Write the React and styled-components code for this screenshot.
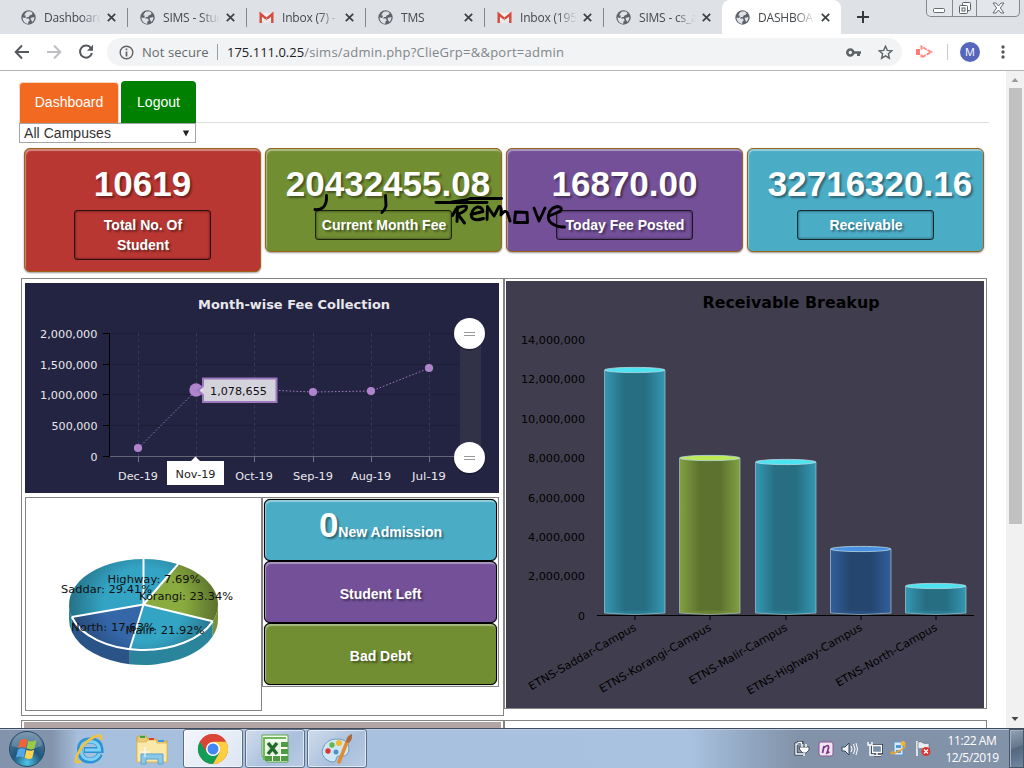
import React from "react";
import styled, { createGlobalStyle } from "styled-components";

const Global = createGlobalStyle`
  * { box-sizing: border-box; }
  html, body { margin: 0; padding: 0; background: #fff; overflow: hidden; }
  svg { display: block; flex: none; }
`;
const ui = `"Open Sans", "Noto Sans", sans-serif`;
const arial = `"Liberation Sans", Arial, sans-serif`;
const verdana = `"DejaVu Sans", Verdana, sans-serif`;

const Screen = styled.div`
  width: 1024px; height: 768px; display: flex; flex-direction: column;
  position: relative; overflow: hidden; font-family: ${arial};
`;

/* ---------- browser ---------- */
const TabStrip = styled.div`
  height: 34px; flex: none; display: flex; background: #dee1e6; padding-left: 8px;
`;
const Tab = styled.div`
  width: 119px; height: 34px; display: flex; align-items: center; padding: 0 11px 0 13px;
  font: 12px ${ui}; letter-spacing: -0.2px; color: #45494d; position: relative;
  background: ${(p) => (p.$active ? "#fff" : "transparent")};
  border-radius: 8px 8px 0 0;
  &::after {
    content: ""; position: absolute; right: -1px; top: 8px; width: 1px; height: 19px;
    background: ${(p) => (p.$sep ? "#84878c" : "transparent")};
  }
`;
const TabTitle = styled.span`
  width: 57px; margin-left: 8px; margin-right: 6px; white-space: nowrap; overflow: hidden;
  mask-image: linear-gradient(90deg, #000 65%, transparent 100%);
`;
const NewTab = styled.div`padding: 10px 0 0 15px;`;
const WinButtons = styled.div`
  margin-left: auto; margin-right: 4px; width: 94px; height: 17px; display: flex;
  border: 1px solid #85888d; border-top: 0; border-radius: 0 0 5px 5px; background: #e3e6ea;
`;
const WinButton = styled.div`
  width: ${(p) => p.$w}px; display: flex; align-items: center; justify-content: center;
  border-right: ${(p) => (p.$last ? 0 : 1)}px solid #85888d;
`;
const Toolbar = styled.div`
  height: 37px; flex: none; display: flex; align-items: center; background: #fff;
  border-bottom: 1px solid #b4b4b6; padding: 0 0 0 14px;
`;
const ToolIcon = styled.div`margin-right: ${(p) => p.$gap || 0}px;`;
const Extension = styled.div`margin-left: 14px;`;
const Omnibox = styled.div`
  width: 795px; height: 28px; border-radius: 14px; background: #f1f3f4; display: flex;
  align-items: center; padding: 0 9px 0 12px; margin-left: 13px; font: 13px ${ui}; color: #80868b;
`;
const Secure = styled.span`
  margin-left: 8px; width: 76px; border-right: 1px solid #9a9da1; line-height: 16px; color: #666a6e;
  white-space: nowrap; height: 16px; letter-spacing: 0.08px;
`;
const Url = styled.span`
  margin-left: 9px; flex: 1; white-space: nowrap; letter-spacing: 0.24px;
  b { font-weight: 400; color: #202124; letter-spacing: 0; }
`;
const Avatar = styled.div`
  width: 20px; height: 20px; border-radius: 50%; background: #5666bd; color: #fff;
  font: 11px/20px ${ui}; text-align: center; margin: 0 21px 0 12px;
`;
const Divider = styled.div`width: 1px; height: 16px; background: #c9cbcf; margin-left: 14px;`;

/* ---------- page ---------- */
const Viewport = styled.div`height: 657px; flex: none; display: flex; overflow: hidden;`;
const Page = styled.div`width: 1006px; padding: 10px 0 0 19px; height: 657px; overflow: hidden;`;
const Nav = styled.div`
  width: 970px; height: 42px; display: flex; align-items: flex-end; border-bottom: 1px solid #ddd;
`;
const NavTab = styled.div`
  width: ${(p) => p.$w}px; height: ${(p) => p.$h}px; margin: 0 ${(p) => p.$gap}px -1px 0;
  background: ${(p) => p.$bg}; color: #fff; font-size: 14px; text-align: center;
  border-radius: 4px 4px 0 0;
  border: 1px solid ${(p) => p.$edge}; border-width: ${(p) => (p.$edge === "none" ? 0 : "1px 1px 0")};
  line-height: ${(p) => (p.$edge === "none" ? 42 : 38)}px;
`;
const Select = styled.div`
  width: 177px; height: 20px; border: 1px solid #a6a6a6; display: flex; justify-content: space-between;
  align-items: center; padding: 0 5px 0 4px; font-size: 14px; letter-spacing: 0.05px; color: #333; background: #fff;
`;
const Cards = styled.div`display: flex; align-items: flex-start; gap: 4px; margin: 5px 0 0 5px; height: 130px;`;
const Card = styled.div`
  width: 237px; padding: 16px 0 11px; display: flex; flex-direction: column; align-items: center;
  background: ${(p) => p.$bg}; border: 1px solid #9a6414; border-radius: 6px;
  box-shadow: inset 1px 2px 1px rgba(255,255,255,.4), 0 1px 2px rgba(0,0,0,.4);
  color: #fff; font-weight: bold; text-shadow: 2px 2px 2px rgba(0,0,0,.4);
`;
const Amount = styled.div`
  font-size: 35px; line-height: 37px; white-space: nowrap; margin-bottom: 8px;
  transform: translateX(${(p) => p.$shift || 0}px);
`;
const CardLabel = styled.div`
  width: 137px; padding: 4px 16px 4px 17px; border: 1px solid rgba(0,0,0,.75); border-radius: 3px;
  box-shadow: inset 0 0 3px rgba(0,0,0,.6); font-size: 14px; line-height: 20px; text-align: center;
  span { white-space: nowrap; margin: 0 -12px; }
`;
const Grid = styled.div`display: flex; align-items: flex-start; margin-left: 2px; height: 442px;`;
const LeftCell = styled.div`width: 483px; height: 438px; border: 1px solid #848484; padding: 4px 3px;`;
const RightCell = styled.div`width: 483px; height: 431px; border: 1px solid #848484; padding: 2px 1px;`;
const Lower = styled.div`display: flex; margin-top: 4px; align-items: flex-start;`;
const PieBox = styled.div`width: 237px; height: 214px; border: 1px solid #848484;`;
const Stack = styled.div`width: 237px; height: 190px; border: 1px solid #848484; padding: 1px;`;
const StackButton = styled.div`
  height: 62px; border: 1px solid #000; border-radius: 6px; background: ${(p) => p.$bg};
  box-shadow: inset 1px 2px 1px rgba(255,255,255,.4), 0 0 1px #000;
  color: #fff; font-size: 14px; font-weight: bold; display: flex; justify-content: center;
  align-items: baseline; line-height: ${(p) => (p.$big ? 50 : 64)}px;
  text-shadow: 2px 2px 2px rgba(0,0,0,.4);
  big { font-size: 35px; }
`;
const NextRow = styled.div`display: flex; margin-left: 2px;`;
const NextCell = styled.div`
  width: 483px; height: 20px; border: 1px solid #848484; padding: 1px 2px;
  &::before { content: ""; display: block; height: 18px; background: ${(p) => p.$fill || "#fff"}; }
`;
const Scrollbar = styled.div`
  width: 18px; background: #f1f1f1; display: flex; flex-direction: column; align-items: center;
`;
const Thumb = styled.div`width: 13px; height: 436px; flex: none; background: #c1c1c1; margin: 0 0 auto;`;

/* ---------- taskbar ---------- */
const Taskbar = styled.div`
  height: 40px; flex: none; border-top: 1px solid #3f4a5c; display: flex; align-items: center;
  box-shadow: inset 0 1px 0 #bfcde0;
  background: linear-gradient(90deg, #8293ab 0, #8294ac 52px, #a6bfdc 78px, #a8c1df 370px, #a9c2e0 690px, #8fa4be 755px, #8292a8 800px, #8292a8 100%);
`;
const Slot = styled.div`width: ${(p) => p.$w}px; display: flex; justify-content: center;`;
const AppButton = styled.div`
  width: 60px; height: 39px; margin-right: 2px; border: 1px solid #5d6d86; border-radius: 3px;
  box-shadow: inset 0 0 0 1px rgba(255,255,255,.6); display: flex; align-items: center; justify-content: center;
  background: ${(p) => (p.$active ? "linear-gradient(135deg,#f3f6fb,#dbe5f2)" : "linear-gradient(135deg,#d0dced,#a9bfdc 60%,#b9cce4)")};
`;
const Tray = styled.div`margin-left: auto; display: flex; align-items: center;`;
const TrayIcons = styled.div`display: flex; align-items: center; gap: 7.600px; margin-right: 8px;`;
const Clock = styled.div`
  width: 64px; margin-right: 5px; text-align: center; color: #fff; font: 12px/17px ${ui}; letter-spacing: -0.4px;
  white-space: nowrap;
`;
const ShowDesktop = styled.div`
  width: 15px; height: 39px; border: 1px solid #47576a; box-shadow: inset 1px 1px 0 #a5b1c2;
  background: linear-gradient(160deg,#94a2b4 0,#66788f 45%,#53677e 50%,#7187a0 100%);
`;
const Ink = styled.svg`position: absolute; left: 310px; top: 190px;`;

/* ---------- icons ---------- */
const Globe = () => (
  <svg width="15" height="15" viewBox="0 0 15 15">
    <circle cx="7.500" cy="7.500" r="7.200" fill="#5f6368" />
    <path d="M6.500 1.600h3.500l1.600 1.600-1 1.600-2 .6-.8 1.600H6L5 8.400h2.800l1 2-1.500 1.400v2C4 13.700 1.700 11 1.500 7.500L4.400 8l.4-2.500H3.300C4 3.500 5 2.300 6.500 1.600z M9.500 8l3.800-1c.2 2-.6 3.800-2 5l-1-1.700z" fill="#dee1e6" />
  </svg>
);
const Gmail = () => (
  <svg width="15" height="15" viewBox="0 0 15 15">
    <path d="M1 3h13v9.500H1z" fill="#f2efee" />
    <path d="M1.700 13V4l5.800 5 5.800-5v9" fill="none" stroke="#d64a3d" strokeWidth="2.400" strokeLinejoin="miter" />
    <path d="M3.500 12l4-3 4 3" stroke="#ddd" fill="none" />
  </svg>
);
const Close = () => (
  <svg width="9" height="9" viewBox="0 0 9 9"><path d="M.8.8l7.400 7.400M8.200.8L.8 8.200" stroke="#3c4043" strokeWidth="1.700" /></svg>
);

const tabs = [
  ["Dashboard", "web"], ["SIMS - Student", "web"], ["Inbox (7) - m", "mail"], ["TMS", "web"],
  ["Inbox (195) -", "mail"], ["SIMS - cs_adm", "web"], ["DASHBOARD", "web"],
];

const Browser = () => (
  <>
    <TabStrip>
      {tabs.map(([name, kind], i) => (
        <Tab key={i} $active={i === 6} $sep={i < 5}>
          {kind === "mail" ? <Gmail /> : <Globe />}
          <TabTitle>{name}</TabTitle>
          <Close />
        </Tab>
      ))}
      <NewTab><svg width="14" height="14" viewBox="0 0 14 14"><path d="M7 1v12M1 7h12" stroke="#35393d" strokeWidth="2" /></svg></NewTab>
      <WinButtons>
        <WinButton $w={26}><svg width="14" height="15"><rect x="1.500" y="7.500" width="11" height="4" rx="1" fill="#fff" stroke="#686b70" /></svg></WinButton>
        <WinButton $w={25}><svg width="14" height="14" fill="#fff" stroke="#5c5f64"><rect x="4.500" y="1.500" width="8" height="8" rx="1" /><rect x="1.500" y="4.500" width="8" height="8" rx="1" /><rect x="4" y="7" width="3" height="3" /></svg></WinButton>
        <WinButton $w={42} $last><svg width="13" height="12"><path d="M1 1h3l2.500 3L9 1h3L8.300 6 12 11H9L6.500 8 4 11H1l3.700-5z" fill="#fff" stroke="#686b70" /></svg></WinButton>
      </WinButtons>
    </TabStrip>
    <Toolbar>
      <ToolIcon $gap={16}><svg width="16" height="16" fill="none" stroke="#55595e" strokeWidth="2"><path d="M15 8H2M8 1.500L1.700 8 8 14.500" /></svg></ToolIcon>
      <ToolIcon $gap={16}><svg width="16" height="16" fill="none" stroke="#bdbfc2" strokeWidth="2"><path d="M1 8h13M8 1.500L14.300 8 8 14.500" /></svg></ToolIcon>
      <svg width="16" height="16"><path d="M13 4.200A6 6 0 1 0 13.900 9" fill="none" stroke="#55595e" strokeWidth="2" /><path d="M15 .8v6H9z" fill="#55595e" /></svg>
      <Omnibox>
        <svg width="15" height="15" fill="none" stroke="#5f6368" strokeWidth="1.400"><circle cx="7.500" cy="7.500" r="6.300" /><path d="M7.500 6.500v5M7.500 3.500v1.700" strokeWidth="1.700" /></svg>
        <Secure>Not secure</Secure>
        <Url><b>175.111.0.25</b>/sims/admin.php?ClieGrp=&amp;&amp;port=admin</Url>
        <ToolIcon $gap={17}><svg width="15" height="9"><circle cx="4.300" cy="4.500" r="3" fill="none" stroke="#5f6368" strokeWidth="2.600" /><path d="M7 3.200h8v2.600h-1v2.200h-3V5.800H7z" fill="#5f6368" /></svg></ToolIcon>
        <svg width="15" height="15" viewBox="0 0 15 15"><path d="M7.500 1.300l1.800 4.100 4.500.4-3.400 3 1 4.400-3.900-2.300-3.900 2.300 1-4.400-3.400-3 4.500-.4z" fill="none" stroke="#5f6368" strokeWidth="1.400" /></svg>
      </Omnibox>
      <Extension><svg width="17" height="14"><rect x="0" y="4" width="4" height="6" fill="#ff7b78" /><path d="M5.500 4.500V1.500L15 7l-9.500 5.500v-3" fill="none" stroke="#ff8885" strokeWidth="2" strokeDasharray="4 1" /></svg></Extension>
      <Divider />
      <Avatar>M</Avatar>
      <svg width="4" height="14" fill="#55595e"><circle cx="2" cy="2" r="1.700" /><circle cx="2" cy="7" r="1.700" /><circle cx="2" cy="12" r="1.700" /></svg>
    </Toolbar>
  </>
);

/* ---------- charts ---------- */
const months = [["Dec-19", 138.5, 448], ["Nov-19", 196.5, 390], ["Oct-19", 254.5, 389.5], ["Sep-19", 313.5, 392], ["Aug-19", 371.5, 391], ["Jul-19", 429.5, 368]];
const feeTicks = [["2,000,000", 333.5, 57.5], ["1,500,000", 364.5, 57.5], ["1,000,000", 394.5, 57.5], ["500,000", 425.5, 46], ["0", 456.5, 7]];

const Knob = ({ y }) => (
  <g>
    <circle cx="469.500" cy={y + 1} r="16" fill="#111122" opacity=".5" />
    <circle cx="469.500" cy={y} r="15.500" fill="#fff" />
    <path d={`M464 ${y - 1}h11M464 ${y + 2}h11`} stroke="#999" />
  </g>
);

const FeeChart = () => (
  <svg width="474" height="210" viewBox="25 283 474 210" fontFamily={verdana} fontSize="11" fill="#e8e8ec">
    <rect x="25" y="283" width="474" height="210" fill="#232342" />
    <text x="294" y="309" fontSize="13" fontWeight="bold" textAnchor="middle" textLength="192" lengthAdjust="spacingAndGlyphs">Month-wise Fee Collection</text>
    {feeTicks.map(([t, y, w]) => (
      <g key={t}>
        <path d={`M110 ${y}H458`} stroke="#1d1d36" />
        <path d={`M103 ${y}H110`} stroke="#000" />
        <text x="97.500" y={y + 4.500} textAnchor="end" textLength={w} lengthAdjust="spacingAndGlyphs">{t}</text>
      </g>
    ))}
    {months.map(([m, x]) => (
      <g key={m}>
        <path d={`M${x} 333V456`} stroke="#383853" strokeDasharray="3 3" />
        <path d={`M${x} 457v5`} stroke="#73738a" />
        <text x={x - 0.5} y="480" textAnchor="middle" textLength={m === "Jul-19" ? 34 : m === "Oct-19" ? 37.5 : 40} lengthAdjust="spacingAndGlyphs">{m}</text>
      </g>
    ))}
    <path d="M109.500 333v124" stroke="#000" />
    <path d="M110 456.500H458" stroke="#656578" />
    <rect x="460" y="333" width="21" height="124" fill="#313147" />
    <polyline points={months.map((m) => m[1] + "," + m[2]).join(" ")} fill="none" stroke="#a77ec2" strokeDasharray="1.500 2" />
    {months.map(([m, x, y], i) => <circle key={m} cx={x - 0.5} cy={y} r={i === 1 ? 6.7 : 4.1} fill="#b084cc" />)}
    <path d="M203 378.500H276.500V402H203V395L198 390.500 203 386z" fill="#e4e2e8" fillOpacity=".92" stroke="#9d77c0" strokeWidth="2" />
    <text x="210" y="395" fill="#111" textLength="57" lengthAdjust="spacingAndGlyphs">1,078,655</text>
    <path d="M167 461H191L195.500 456.500 200 461H224V485H167z" fill="#fff" />
    <text x="195.500" y="478" textAnchor="middle" fill="#222" textLength="40" lengthAdjust="spacingAndGlyphs">Nov-19</text>
    <Knob y={333.5} />
    <Knob y={457.5} />
  </svg>
);

const bars = [
  ["ETNS-Saddar-Campus", 604.5, 370, "teal", "#4ce4f0"], ["ETNS-Korangi-Campus", 679.5, 458, "olive", "#bdea55"],
  ["ETNS-Malir-Campus", 755.5, 462, "teal", "#4ce4f0"], ["ETNS-Highway-Campus", 830.5, 549, "navy", "#4a90e4"],
  ["ETNS-North-Campus", 905.5, 586, "teal", "#4ce4f0"],
];
const ramps = { teal: ["#3498b3", "#276e82"], olive: ["#83a142", "#5d722e"], navy: ["#315f9d", "#25466f"] };
const labelLengths = [122, 127, 111, 131, 115];

const ReceivableChart = () => (
  <svg width="478" height="427" viewBox="506 281 478 427" fontFamily={verdana} fontSize="11" fill="#000">
    <defs>
      {Object.entries(ramps).map(([id, [edge, mid]]) => (
        <linearGradient id={id} key={id}>
          <stop offset="0" stopColor={edge} /><stop offset=".33" stopColor={mid} />
          <stop offset=".67" stopColor={mid} /><stop offset="1" stopColor={edge} />
        </linearGradient>
      ))}
    </defs>
    <rect x="506" y="281" width="478" height="427" fill="#403e4e" />
    <text x="791" y="308" fontSize="16" fontWeight="bold" textAnchor="middle" textLength="177" lengthAdjust="spacingAndGlyphs">Receivable Breakup</text>
    {[14, 12, 10, 8, 6, 4, 2, 0].map((n, i) => (
      <text key={n} x="585" y={344 + i * 39.4} textAnchor="end" textLength={n > 8 ? 64 : n ? 57 : 7} lengthAdjust="spacingAndGlyphs">{n ? n + ",000,000" : "0"}</text>
    ))}
    {bars.map(([name, x, y, id, cap], i) => (
      <g key={name}>
        <path d={`M${x} ${y}V613Q${x + 30} 616 ${x + 60.5} 613V${y}z`} fill={`url(#${id})`} stroke="#a0bfc6" strokeOpacity=".75" />
        <path d={`M${x + 1} 612.500Q${x + 30} 608.500 ${x + 59.5} 612.500Q${x + 30} 616 ${x + 1} 612.500`} fill={ramps[id][0]} opacity=".35" />
        <ellipse cx={x + 30.25} cy={y} rx="30" ry="2.600" fill={cap} stroke="#b5dce6" strokeWidth=".8" />
        <path d={`M${x + 30.5} 616v4`} stroke="#000" />
        <text transform={`translate(${x + 32.5} 629.500) rotate(-30)`} textAnchor="end" textLength={labelLengths[i]} lengthAdjust="spacingAndGlyphs">{name}</text>
      </g>
    ))}
    <path d="M597 615.500H974" stroke="#000" />
  </svg>
);

const slices = [["Highway", 7.69, "pTeal", "#2a849c"], ["Korangi", 23.34, "pOlive", "#76923a"], ["Malir", 21.92, "pTeal", "#2a849c"], ["North", 17.63, "pNavy", "#2a5488"], ["Saddar", 29.41, "pTeal", "#2a849c"]];
const CX = 143.5, CY = 604.5, RX = 74.5, RY = 45.5, DEPTH = 15;
const at = (f, dy = 0) => `${CX + RX * Math.sin(f * 2 * Math.PI)} ${CY - RY * Math.cos(f * 2 * Math.PI) + dy}`;
const pieLabels = [["Highway: 7.69%", 107.5, 583, 93], ["Saddar: 29.41%", 61, 593, 91], ["Korangi: 23.34%", 139, 600, 94], ["North: 17.63%", 71, 631, 84], ["Malir: 21.92%", 125.5, 634, 79]];

const PieChart = () => {
  let acc = 0;
  const parts = slices.map(([n, v, fill, side]) => {
    const a = acc; acc += v / 100;
    return { n, a, b: acc, fill, side };
  });
  return (
    <svg width="235" height="212" viewBox="26 498 235 212" fontFamily={verdana} fontSize="11" fill="#111">
      <defs>
        {[["pTeal", "#34a4c4", "#22697c"], ["pOlive", "#8aab3f", "#52672a"], ["pNavy", "#3466a8", "#24416a"]].map(([id, c, e]) => (
          <radialGradient key={id} id={id} gradientUnits="userSpaceOnUse" cx="0" cy="0" r="1" gradientTransform="translate(143.5 604.5) scale(80 74)">
            <stop offset="0" stopColor={c} /><stop offset=".5" stopColor={c} /><stop offset="1" stopColor={e} />
          </radialGradient>
        ))}
      </defs>
      {parts.map((p) => {
        const a = Math.max(p.a, 0.25), b = Math.min(p.b, 0.75);
        return b > a ? <path key={p.n} d={`M${at(a)}A${RX} ${RY} 0 0 1 ${at(b)}L${at(b, DEPTH)}A${RX} ${RY} 0 0 0 ${at(a, DEPTH)}z`} fill={p.side} /> : null;
      })}
      {parts.map((p) => <path key={p.n} d={`M${CX} ${CY}L${at(p.a)}A${RX} ${RY} 0 0 1 ${at(p.b)}z`} fill={`url(#${p.fill})`} />)}
      {parts.map((p) => <path key={p.n} d={`M${CX} ${CY}L${at(p.a)}`} stroke="#fff" strokeWidth="2" />)}
      <path d={`M${at(parts[1].b)}A${RX} ${RY} 0 0 1 ${at(parts[3].b)}`} fill="none" stroke="#fff" strokeWidth="2" />
      {pieLabels.map(([t, x, y, w]) => <text key={t} x={x} y={y} textLength={w} lengthAdjust="spacingAndGlyphs">{t}</text>)}
    </svg>
  );
};

const stats = [
  ["10619", "Total No. Of Student", "#b93733", 0], ["20432455.08", "Current Month Fee", "#718e33", 4.5],
  ["16870.00", "Today Fee Posted", "#735098", 0], ["32716320.16", "Receivable", "#4bacc6", 4.5],
];

const Dashboard = () => (
  <Viewport>
    <Page>
      <Nav>
        <NavTab $w={100} $h={41} $gap={2} $bg="#f26a21" $edge="#f6d8c5">Dashboard</NavTab>
        <NavTab $w={75} $h={42} $gap={0} $bg="#008000" $edge="none">Logout</NavTab>
      </Nav>
      <Select>All Campuses<svg width="8" height="7"><path d="M.8.500h6.400L4 6.500z" fill="#222" /></svg></Select>
      <Cards>
        {stats.map(([n, label, bg, shift]) => (
          <Card key={label} $bg={bg}>
            <Amount $shift={shift}>{n}</Amount>
            <CardLabel>{label.startsWith("Total") ? label : <span>{label}</span>}</CardLabel>
          </Card>
        ))}
      </Cards>
      <Grid>
        <LeftCell>
          <FeeChart />
          <Lower>
            <PieBox><PieChart /></PieBox>
            <Stack>
              <StackButton $bg="#4bacc6" $big><big>0</big>New Admission</StackButton>
              <StackButton $bg="#735098">Student Left</StackButton>
              <StackButton $bg="#718e33">Bad Debt</StackButton>
            </Stack>
          </Lower>
        </LeftCell>
        <RightCell><ReceivableChart /></RightCell>
      </Grid>
      <NextRow><NextCell $fill="#b1a5a5" /><NextCell /></NextRow>
    </Page>
    <Scrollbar>
      <svg width="8" height="17"><path d="M.5 11L4 7l3.500 4z" fill="#999" /></svg>
      <Thumb />
      <svg width="8" height="14"><path d="M.5 3h7L4 7z" fill="#444" /></svg>
    </Scrollbar>
  </Viewport>
);

const Handwriting = () => (
  <Ink width="260" height="45" viewBox="310 190 260 45" fill="none" stroke="#000" strokeWidth="2.900" strokeLinecap="round" strokeLinejoin="round">
    <path d="M326.500 195.500Q327 204 323 207.500 319 210.500 315 209.500M385.500 195.500L386 206Q385 210 382 212.500" />
    <path d="M436 202.500H487M452 202L466 200 470 198.500H501.500" />
    <path d="M457.500 207L457 221.500M452.500 215.500L456 209Q461 205 466.500 206.500 468 210 458 214.500L464.500 223" />
    <path d="M471 214.500L483 211.500Q482 206.500 477 207 471 209.500 471.500 217 474 221.500 483.500 218.500" />
    <path d="M487 219.500L487.500 206.500 494 216 499 206.500Q502 206 501 215 505 209 507.500 213L510 221" />
    <path d="M515.500 212L527 212.500 527.500 222.500H514.500zM534 208L539 221 545 208" />
    <path d="M549 216L560 211.500Q563.500 207 557 206.500 550 208 548.500 215 547.500 221 552.500 224 558 227.500 564.500 227" />
  </Ink>
);

/* ---------- desktop ---------- */
const Bar = () => (
  <Taskbar>
    <Slot $w={54}><svg width="38" height="38" viewBox="0 0 38 38">
      <defs><radialGradient id="orb" cx=".5" cy=".9" r=".9"><stop offset="0" stopColor="#4fc6e8" /><stop offset=".45" stopColor="#1f587e" /><stop offset="1" stopColor="#5d7f9c" /></radialGradient></defs>
      <circle cx="19" cy="19" r="17.500" fill="url(#orb)" stroke="#294b67" />
      <path d="M4 16a15 14 0 0 1 30 0Q18 22 4 16z" fill="#fff" opacity=".2" />
      <path d="M12 10.500q4-2.500 7.500-.5l-1.800 8q-3.700-2-7.500 0z" fill="#ef6335" /><path d="M20.500 10.500q3.500 2 8-.5l-2 8.500q-4 2-7.800-.2z" fill="#9bcb45" />
      <path d="M10 19.300q4-2 7.500 0l-1.800 8.200q-4-2-7.700 0z" fill="#54a7e8" /><path d="M18.500 19.800q4 2 7.700 0l-2 8.500q-4 1.500-7.500-.5z" fill="#ffd34c" />
    </svg></Slot>
    <Slot $w={70}><svg width="34" height="34" viewBox="0 0 34 34">
      <path d="M28 22q-3 6.500-10 6.500-9.500 0-10-10.500 0-9.500 10-9.500 10 0 10.500 9.500H12" fill="none" stroke="#2d93d4" strokeWidth="6" />
      <path d="M27.500 22q-3 5.500-9.500 5.500-8.500 0-9-9.500 0-8.500 9-8.500 9 0 9.500 8.500H13" fill="none" stroke="#7fd0f5" strokeWidth="3" />
      <path d="M9 29q-8 4-4-5Q10 11 22 5q9-4 7 3" fill="none" stroke="#f2c33b" strokeWidth="2.600" />
    </svg></Slot>
    <Slot $w={56}><svg width="34" height="32" viewBox="0 0 34 32">
      <path d="M2 5l1-2h8l2 3h8l2 2h9v21H2z" fill="#eacb72" stroke="#c9a44b" /><path d="M2 9h9l2-2h8l1 3h10v19H2z" fill="#f9e8a8" stroke="#dcbd65" />
      <path d="M5 4h5" stroke="#39a347" strokeWidth="2" /><path d="M14 6h5" stroke="#d9442f" strokeWidth="2" /><path d="M23 8h6" stroke="#3b9ae0" strokeWidth="2" />
      <path d="M6 31V21h22v10h-5v-5H11v5z" fill="#8bc8ea" stroke="#5ca3cf" /><path d="M10 14v10M5 19h10" stroke="#fff" />
    </svg></Slot>
    <Slot $w={3} />
    <AppButton $active><svg width="32" height="32" viewBox="0 0 32 32">
      <circle cx="16" cy="16" r="15" fill="#dc4437" /><path d="M3 8.500A15 15 0 0 0 16 31l6.500-11.200L16 16z" fill="#0f9d58" />
      <path d="M29 8.500H16l6.500 11.300L16 31A15 15 0 0 0 29 8.500z" fill="#ffcd40" /><path d="M3 8.500L10 20l6-4 0-7.500H29A15 15 0 0 0 3 8.500z" fill="#dc4437" />
      <circle cx="16" cy="16" r="7" fill="#fff" /><circle cx="16" cy="16" r="5.500" fill="#4285f4" />
    </svg></AppButton>
    <AppButton><svg width="32" height="32" viewBox="0 0 32 32">
      <path d="M3 2h26v27H8L3 23z" fill="#f3fbef" stroke="#5aa446" /><path d="M5 27V5h22" fill="none" stroke="#70b85c" strokeWidth="2" />
      <g fill="#4f9a43"><path d="M22 9h7v5h-7zM22 16h7v5h-7zM22 23h7v5h-7zM14 23h7v5h-7zM6 23h7v5H6z" /></g>
      <path d="M8 9h13v13H8z" fill="#e5f4df" /><path d="M9 10l9 11M18 10L9 21" stroke="#246b2b" strokeWidth="3.500" />
    </svg></AppButton>
    <AppButton><svg width="34" height="34" viewBox="0 0 34 34">
      <path d="M15 7q13-1 14 9 0 9-8 8-5-1-5 4-2 4-9 0-7-5-4-12 3-8 12-9z" fill="#cfe6f5" stroke="#6b9dc2" />
      <circle cx="8" cy="19" r="2.700" fill="#d83932" /><circle cx="12" cy="13" r="2.700" fill="#65b74b" /><circle cx="19" cy="11" r="3" fill="#f4bb2e" /><circle cx="16" cy="20" r="2.500" fill="#4b93cd" />
      <path d="M27 10l-8 20" stroke="#e18b2d" strokeWidth="3.500" strokeLinecap="round" /><path d="M26 10q0-6 6-8 1 5-3 9z" fill="#a96c3e" />
    </svg></AppButton>
    <Tray>
      <TrayIcons>
        <svg width="16" height="16" fill="none"><path d="M4 3H2v10h7M3 1h5v2" stroke="#2e3948" strokeWidth="3" /><path d="M4 3H2v10h7M3.500 1.500h4V3" stroke="#fff" strokeWidth="1.400" /><path d="M5 6h10v3l-3 3H9L6 9zM8 3v3M12 3v3M10 12v3" fill="#fff" stroke="#2e3948" strokeWidth=".8" /><path d="M8 3v3M12 3v3M10 12v3" stroke="#fff" strokeWidth="1.500" /></svg>
        <svg width="16" height="16"><rect x="1" y="1" width="14" height="14" rx="2" fill="#efe5f1" stroke="#8d5795" /><path d="M4.500 12l1.500-7M5.500 7q5.500-5 5 0l-1.500 5 2.500-1" fill="none" stroke="#7d3389" strokeWidth="1.700" /></svg>
        <svg width="17" height="16" fill="none" stroke="#fff"><path d="M1 6h3l4-4v12l-4-4H1z" fill="#eef2f7" stroke="#37465a" /><path d="M10 5q2 3 0 6M12.500 3q3 5 0 10M15 2q3 6 0 12" /></svg>
        <svg width="17" height="16" fill="none"><path d="M6.500 4.500h9v7h-9zM8 14.500h7M11 12v3" stroke="#263343" strokeWidth="3" /><path d="M6.500 4.500h9v7h-9z" fill="#7a8fa9" stroke="#fff" strokeWidth="1.300" /><path d="M8 14.500h7M11 12v3M2 1v3h4V1M4 4v10h4" stroke="#fff" strokeWidth="1.400" /></svg>
        <svg width="17" height="17"><rect x="4" y="2" width="9" height="13" fill="#dceaf6" stroke="#5a98c9" /><path d="M6 5h5v3H6zM6 10h5v3H6z" fill="#4a9be0" /><path d="M3 11Q-2 16 7 12T15 5" stroke="#f0a32d" strokeWidth="1.600" fill="none" /><circle cx="13" cy="3.500" r="2.400" fill="#f2b33a" /></svg>
        <svg width="17" height="17"><path d="M2 1v15" stroke="#fff" strokeWidth="1.500" /><path d="M3 2q3-1 5 1 3 1 6 0v7q-3 1-6-1-2-1-5 0z" fill="#e8edf3" stroke="#5a6679" strokeWidth=".6" /><circle cx="11" cy="11.500" r="4.500" fill="#db3330" /><path d="M9 9.500l4 4M13 9.500l-4 4" stroke="#fff" strokeWidth="1.400" /></svg>
      </TrayIcons>
      <Clock>11:22 AM<br />12/5/2019</Clock>
      <ShowDesktop />
    </Tray>
  </Taskbar>
);

export default function App() {
  return (
    <Screen>
      <Global />
      <Browser />
      <Dashboard />
      <Handwriting />
      <Bar />
    </Screen>
  );
}
